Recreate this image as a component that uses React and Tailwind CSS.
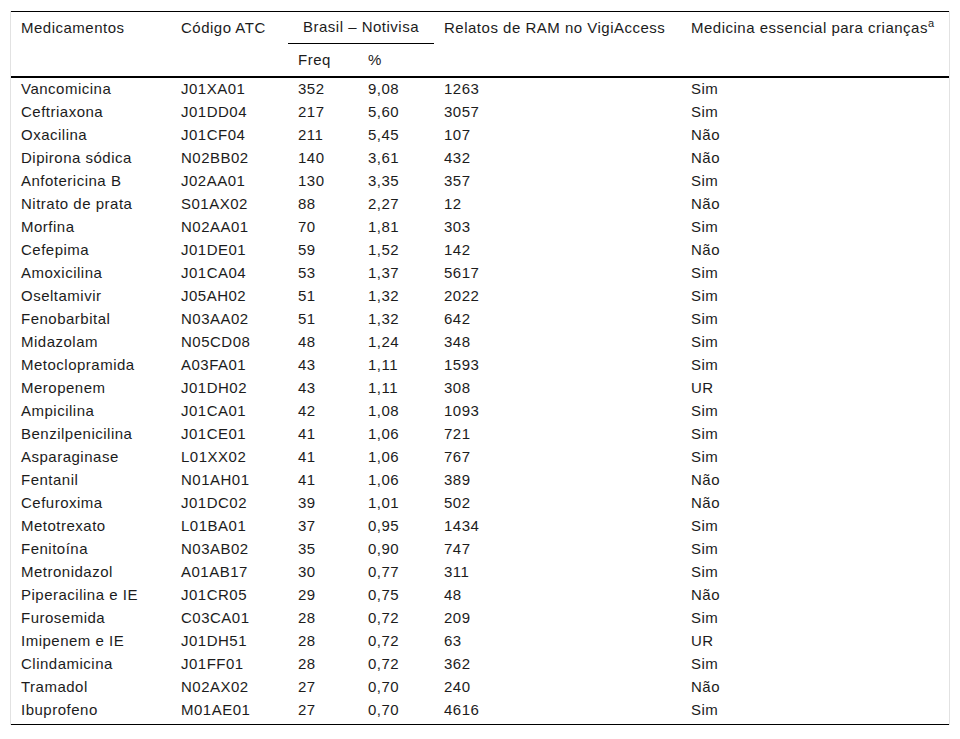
import React from "react";

const rows = [
  ["Vancomicina", "J01XA01", "352", "9,08", "1263", "Sim"],
  ["Ceftriaxona", "J01DD04", "217", "5,60", "3057", "Sim"],
  ["Oxacilina", "J01CF04", "211", "5,45", "107", "Não"],
  ["Dipirona sódica", "N02BB02", "140", "3,61", "432", "Não"],
  ["Anfotericina B", "J02AA01", "130", "3,35", "357", "Sim"],
  ["Nitrato de prata", "S01AX02", "88", "2,27", "12", "Não"],
  ["Morfina", "N02AA01", "70", "1,81", "303", "Sim"],
  ["Cefepima", "J01DE01", "59", "1,52", "142", "Não"],
  ["Amoxicilina", "J01CA04", "53", "1,37", "5617", "Sim"],
  ["Oseltamivir", "J05AH02", "51", "1,32", "2022", "Sim"],
  ["Fenobarbital", "N03AA02", "51", "1,32", "642", "Sim"],
  ["Midazolam", "N05CD08", "48", "1,24", "348", "Sim"],
  ["Metoclopramida", "A03FA01", "43", "1,11", "1593", "Sim"],
  ["Meropenem", "J01DH02", "43", "1,11", "308", "UR"],
  ["Ampicilina", "J01CA01", "42", "1,08", "1093", "Sim"],
  ["Benzilpenicilina", "J01CE01", "41", "1,06", "721", "Sim"],
  ["Asparaginase", "L01XX02", "41", "1,06", "767", "Sim"],
  ["Fentanil", "N01AH01", "41", "1,06", "389", "Não"],
  ["Cefuroxima", "J01DC02", "39", "1,01", "502", "Não"],
  ["Metotrexato", "L01BA01", "37", "0,95", "1434", "Sim"],
  ["Fenitoína", "N03AB02", "35", "0,90", "747", "Sim"],
  ["Metronidazol", "A01AB17", "30", "0,77", "311", "Sim"],
  ["Piperacilina e IE", "J01CR05", "29", "0,75", "48", "Não"],
  ["Furosemida", "C03CA01", "28", "0,72", "209", "Sim"],
  ["Imipenem e IE", "J01DH51", "28", "0,72", "63", "UR"],
  ["Clindamicina", "J01FF01", "28", "0,72", "362", "Sim"],
  ["Tramadol", "N02AX02", "27", "0,70", "240", "Não"],
  ["Ibuprofeno", "M01AE01", "27", "0,70", "4616", "Sim"],
];

const App = () => {
  return (
    <div className="bg-white w-[960px] h-[739px] pt-[11px] pl-[10px]">
      <div className="w-[940px] border-x border-[#e2e2e2]">
        <table
          className="w-[938px] border-collapse table-fixed text-[#1c1c1c] text-[15px] tracking-[0.5px]"
          style={{ fontFamily: '"Liberation Sans", Arial, sans-serif' }}
        >
          <colgroup>
            <col className="w-[160px]" />
            <col className="w-[117px]" />
            <col className="w-[70px]" />
            <col className="w-[76px]" />
            <col className="w-[247px]" />
            <col />
          </colgroup>
          <thead>
            <tr className="h-[32px] border-t border-black">
              <th className="text-left font-normal pl-[10px] align-middle">Medicamentos</th>
              <th className="text-left font-normal pl-[10px] align-middle">Código ATC</th>
              <th colSpan={2} className="font-normal text-center align-middle border-b border-black">
                Brasil – Notivisa
              </th>
              <th className="text-left font-normal pl-[10px] align-middle">Relatos de RAM no VigiAccess</th>
              <th className="text-left font-normal pl-[10px] align-middle">
                Medicina essencial para crianças<sup className="text-[11px]">a</sup>
              </th>
            </tr>
            <tr className="h-[33px] border-b-2 border-black">
              <th></th>
              <th></th>
              <th className="text-left font-normal pl-[10px] align-middle pt-[1px]">Freq</th>
              <th className="text-left font-normal pl-[10px] align-middle pt-[1px]">%</th>
              <th></th>
              <th></th>
            </tr>
          </thead>
          <tbody className="border-b border-black">
            {rows.map((r, i) => (
              <tr key={r[0]} className={i === rows.length - 1 ? "h-[27px] align-top" : "h-[23px]"}>
                {r.map((c, j) => (
                  <td key={j} className={i === rows.length - 1 ? "pl-[10px] pt-[1px] leading-[21px]" : "pl-[10px] leading-[21px]"}>
                    {c}
                  </td>
                ))}
              </tr>
            ))}
          </tbody>
        </table>
      </div>
    </div>
  );
};

export default App;
